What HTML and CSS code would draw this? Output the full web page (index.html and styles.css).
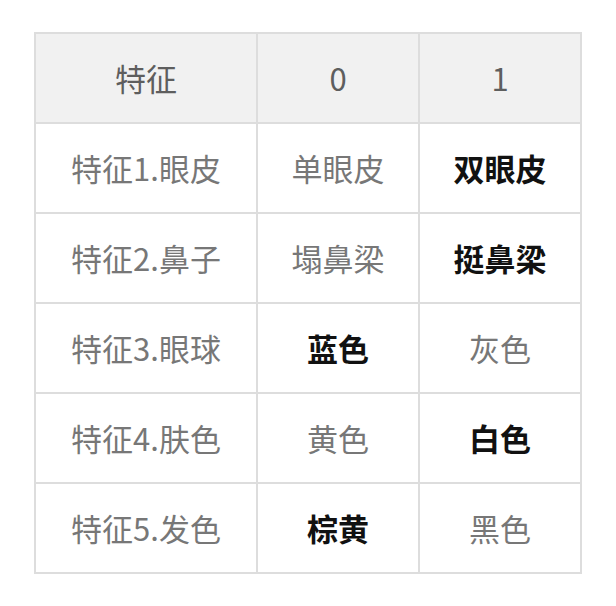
FILE: index.html
```html
<!DOCTYPE html>
<html lang="zh">
<head>
<meta charset="utf-8">
<link rel="stylesheet" href="styles.css">
</head>
<body>
<div class="table">
  <div class="cell head">特征</div>
  <div class="cell head">0</div>
  <div class="cell head">1</div>

  <div class="cell">特征1.眼皮</div>
  <div class="cell">单眼皮</div>
  <div class="cell strong">双眼皮</div>

  <div class="cell">特征2.鼻子</div>
  <div class="cell">塌鼻梁</div>
  <div class="cell strong">挺鼻梁</div>

  <div class="cell">特征3.眼球</div>
  <div class="cell strong">蓝色</div>
  <div class="cell">灰色</div>

  <div class="cell">特征4.肤色</div>
  <div class="cell">黄色</div>
  <div class="cell strong">白色</div>

  <div class="cell">特征5.发色</div>
  <div class="cell strong">棕黄</div>
  <div class="cell">黑色</div>
</div>
</body>
</html>
```
FILE: styles.css
```css
html, body {
  margin: 0;
  padding: 0;
  background: #ffffff;
}
body {
  padding: 32px 0 0 34px;
  font-family: "Noto Sans CJK SC", "Noto Sans", sans-serif;
}
.table {
  display: grid;
  grid-template-columns: 220px 160px 160px;
  grid-auto-rows: 88px;
  gap: 2px;
  padding: 2px;
  background: #dddddd;
  width: max-content;
}
.cell {
  background: #ffffff;
  display: flex;
  align-items: center;
  justify-content: center;
  font-size: 31px;
  color: #777777;
  line-height: 1;
  padding-bottom: 2px;
}
.head {
  background: #f1f1f1;
  color: #5e5e5e;
}
.strong {
  color: #111111;
  font-weight: 700;
}
```
